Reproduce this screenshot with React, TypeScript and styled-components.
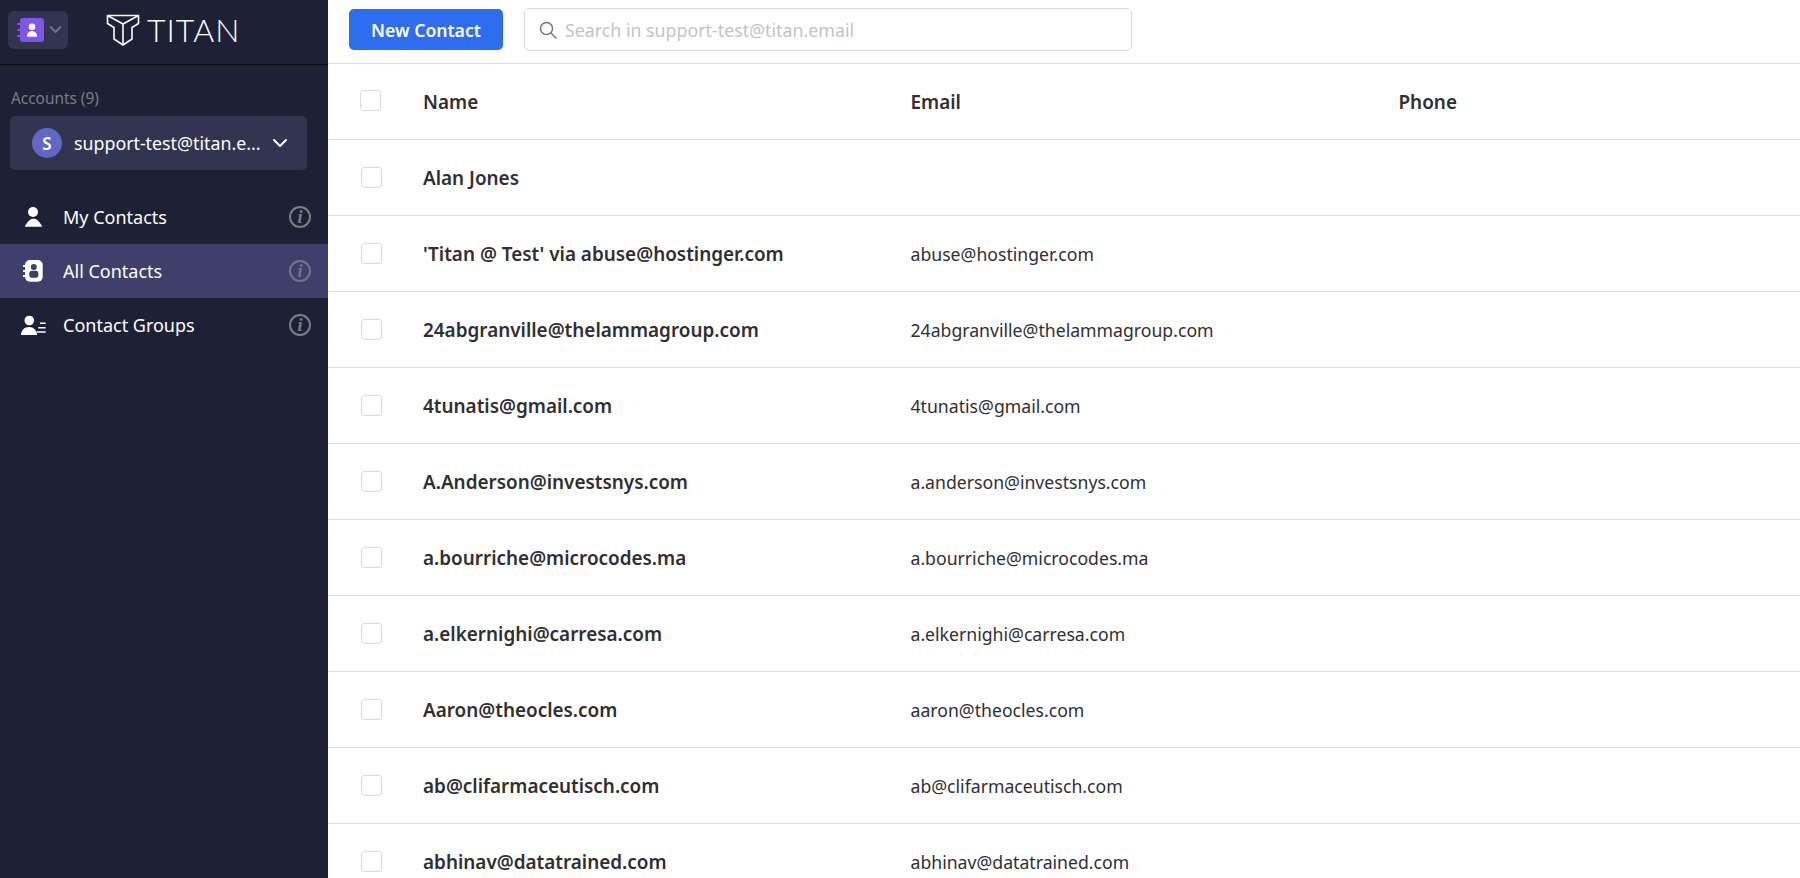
import React from "react";
import styled, { createGlobalStyle } from "styled-components";

const Global = createGlobalStyle`
  html, body { margin: 0; padding: 0; height: 100%; overflow: hidden; background: #fff; }
  body { font-family: "Noto Sans", "Open Sans", sans-serif; }
  * { box-sizing: border-box; }
`;

const Page = styled.div`
  display: flex;
  width: 1800px;
  height: 878px;
  overflow: hidden;
`;

const Sidebar = styled.aside`
  width: 328px;
  flex: none;
  background: #1e2135;
  color: #fff;
  display: flex;
  flex-direction: column;
`;

const Brand = styled.div`
  height: 65px;
  flex: none;
  display: flex;
  align-items: center;
  padding: 0 0 5px 8px;
  border-bottom: 1px solid #0b0d16;
`;

const AppSwitch = styled.div`
  width: 60px;
  height: 38px;
  border-radius: 6px;
  background: #32354f;
  display: flex;
  align-items: center;
  gap: 5px;
  padding-left: 9px;
`;

const Logo = styled.div`
  display: flex;
  align-items: center;
  margin-left: 38px;
  gap: 7px;
`;

const LogoWord = styled.span`
  font-family: "Lato", "Noto Sans", sans-serif;
  font-weight: 300;
  font-size: 32px;
  line-height: 32px;
  letter-spacing: 1px;
  color: #fff;
`;

const AccountsLabel = styled.div`
  margin: 24px 0 0 11px;
  font-size: 15.400px;
  line-height: 20px;
  color: #7b7c85;
`;

const AccountSelect = styled.div`
  margin: 7px 21px 0 10px;
  height: 54px;
  border-radius: 5px;
  background: #32354f;
  display: flex;
  align-items: center;
  padding: 0 19px 0 22px;
`;

const Avatar = styled.div`
  width: 30px;
  height: 30px;
  border-radius: 50%;
  background: #5f68c4;
  font-size: 17px;
  font-weight: 600;
  display: flex;
  align-items: center;
  justify-content: center;
  margin-right: 12px;
`;

const AccountName = styled.span`
  flex: 1;
  font-size: 17.800px;
  white-space: nowrap;
`;

const Nav = styled.nav`
  margin-top: 20px;
  display: flex;
  flex-direction: column;
`;

const NavRow = styled.div<{ $active?: boolean }>`
  height: 54px;
  display: flex;
  align-items: center;
  background: ${(p) => (p.$active ? "#3e3f6a" : "transparent")};
  font-size: 18px;
  color: #fff;
`;

const NavIcon = styled.span`
  width: 63px;
  flex: none;
  padding-left: 21px;
  display: flex;
  align-items: center;
`;

const NavLabel = styled.span`
  flex: 1;
`;

const InfoIcon = styled.span<{ $dim?: boolean }>`
  width: 22px;
  height: 22px;
  margin-right: 17px;
  border: 2px solid ${(p) => (p.$dim ? "#74758a" : "#7d7e84")};
  border-radius: 50%;
  color: ${(p) => (p.$dim ? "#74758a" : "#7d7e84")};
  font-family: "Liberation Serif", serif;
  font-style: italic;
  font-weight: 700;
  font-size: 18px;
  line-height: 18px;
  text-align: center;
`;

const Main = styled.main`
  flex: 1;
  min-width: 0;
  display: flex;
  flex-direction: column;
`;

const Toolbar = styled.div`
  height: 64px;
  flex: none;
  display: flex;
  align-items: center;
  padding: 0 0 4px 21px;
  border-bottom: 1px solid #dedede;
`;

const NewButton = styled.button`
  width: 154px;
  height: 41px;
  border: none;
  border-radius: 5px;
  background: #2f6df0;
  color: #fff;
  font-family: inherit;
  font-size: 17.600px;
  font-weight: 600;
  padding: 0;
`;

const SearchBox = styled.div`
  width: 608px;
  height: 43px;
  margin-left: 21px;
  border: 1px solid #dcdcdc;
  border-radius: 5px;
  display: flex;
  align-items: center;
  gap: 8px;
  padding-left: 14px;
  font-size: 17.800px;
  color: #c4c4c4;
`;

const Row = styled.div`
  height: 76px;
  flex: none;
  display: grid;
  grid-template-columns: 63px 487.500px 488px 1fr;
  align-items: center;
  padding-left: 32px;
  border-bottom: 1px solid #dedede;
  color: #2f2f33;
  font-size: 18.900px;
`;

const Check = styled.span<{ $head?: boolean }>`
  width: 21px;
  height: 21px;
  margin: ${(p) => (p.$head ? "-2px 0 0 0" : "0 0 0 1px")};
  border: 1px solid #dcdcdc;
  border-radius: 3px;
  background: #fff;
`;

const HeadCell = styled.span`
  font-weight: 600;
`;

const NameCell = styled.span`
  font-weight: 600;
`;

const EmailCell = styled.span`
  font-size: 17.650px;
`;

const contacts: [string, string][] = [
  ["Alan Jones", ""],
  ["'Titan @ Test' via abuse@hostinger.com", "abuse@hostinger.com"],
  ["24abgranville@thelammagroup.com", "24abgranville@thelammagroup.com"],
  ["4tunatis@gmail.com", "4tunatis@gmail.com"],
  ["A.Anderson@investsnys.com", "a.anderson@investsnys.com"],
  ["a.bourriche@microcodes.ma", "a.bourriche@microcodes.ma"],
  ["a.elkernighi@carresa.com", "a.elkernighi@carresa.com"],
  ["Aaron@theocles.com", "aaron@theocles.com"],
  ["ab@clifarmaceutisch.com", "ab@clifarmaceutisch.com"],
  ["abhinav@datatrained.com", "abhinav@datatrained.com"],
];

const Person = () => (
  <svg width="26" height="24" viewBox="0 0 26 24" fill="#fff">
    <circle cx="12" cy="7" r="5" />
    <path d="M4 21.700c0-1 .5-2 1.500-3 1.800-3 4-5 7-5s5 2 7 5c1 1 1.500 2 1.500 3z" />
  </svg>
);

const Book = () => (
  <svg width="26" height="24" viewBox="0 0 26 24">
    <rect x="4" y="1" width="17.700" height="21.700" rx="5" fill="#fff" />
    <path d="M2 7h3M2 12h3M2 17h3" stroke="#fff" strokeWidth="2" />
    <circle cx="12.800" cy="8" r="3" fill="#3e3f6a" />
    <rect x="8.300" y="11.700" width="9" height="7" rx="2.500" fill="#3e3f6a" />
  </svg>
);

const Group = () => (
  <svg width="26" height="24" viewBox="0 0 26 24" fill="#fff">
    <circle cx="8.300" cy="7.500" r="4.800" />
    <path d="M0 22c0-4.500 3.500-8 8-8s8 3.500 8 8z" />
    <path d="M19 10.300h5.700M17.300 14.700h7.400M15.700 19h9" stroke="#fff" strokeWidth="1.500" fill="none" />
  </svg>
);

const Chevron = ({ c, w, s }: { c: string; w: number; s: number }) => (
  <svg width={w} height={w} viewBox="0 0 16 16" fill="none" stroke={c} strokeWidth={s} strokeLinecap="round" strokeLinejoin="round">
    <path d="M2 5l6 6 6-6" />
  </svg>
);

export default function App() {
  return (
    <Page>
      <Global />
      <Sidebar>
        <Brand>
          <AppSwitch>
            <svg width="27" height="24" viewBox="0 0 27 24">
              <rect x="3" y="0" width="24" height="24" rx="3" fill="#7f56e6" />
              <path d="M1 6h4M1 12h4M1 18h4" stroke="#7f56e6" strokeWidth="2" strokeLinecap="round" />
              <circle cx="15" cy="8.700" r="3.300" fill="#fff" />
              <path d="M10 18.700c0-3.500 2-5.700 5-5.700s5 2.200 5 5.700z" fill="#fff" />
            </svg>
            <Chevron c="#6e708c" w={13} s={2.500} />
          </AppSwitch>
          <Logo>
            <svg width="34" height="32" viewBox="0 0 34 32" fill="none" stroke="#fff" strokeWidth="1.600" strokeLinejoin="round">
              <path d="M1.500 1.500H32.500V9.500L26 13.500V25L17 31L8 25V13.500L1.500 9.500Z" />
              <path d="M1.500 1.500L17 10L32.500 1.500M17 10V31" />
            </svg>
            <LogoWord>TITAN</LogoWord>
          </Logo>
        </Brand>
        <AccountsLabel>Accounts (9)</AccountsLabel>
        <AccountSelect>
          <Avatar>S</Avatar>
          <AccountName>support-test@titan.e...</AccountName>
          <Chevron c="#fff" w={16} s={2} />
        </AccountSelect>
        <Nav>
          <NavRow>
            <NavIcon><Person /></NavIcon>
            <NavLabel>My Contacts</NavLabel>
            <InfoIcon>i</InfoIcon>
          </NavRow>
          <NavRow $active>
            <NavIcon><Book /></NavIcon>
            <NavLabel>All Contacts</NavLabel>
            <InfoIcon $dim>i</InfoIcon>
          </NavRow>
          <NavRow>
            <NavIcon><Group /></NavIcon>
            <NavLabel>Contact Groups</NavLabel>
            <InfoIcon>i</InfoIcon>
          </NavRow>
        </Nav>
      </Sidebar>
      <Main>
        <Toolbar>
          <NewButton>New Contact</NewButton>
          <SearchBox>
            <svg width="18" height="18" viewBox="0 0 18 18" fill="none" stroke="#757575" strokeWidth="1.500" strokeLinecap="round">
              <circle cx="7.500" cy="7.500" r="6" />
              <path d="M12 12l5 5" />
            </svg>
            Search in support-test@titan.email
          </SearchBox>
        </Toolbar>
        <Row>
          <Check $head />
          <HeadCell>Name</HeadCell>
          <HeadCell>Email</HeadCell>
          <HeadCell>Phone</HeadCell>
        </Row>
        {contacts.map(([n, e]) => (
          <Row key={n}>
            <Check />
            <NameCell>{n}</NameCell>
            <EmailCell>{e}</EmailCell>
            <span />
          </Row>
        ))}
      </Main>
    </Page>
  );
}
